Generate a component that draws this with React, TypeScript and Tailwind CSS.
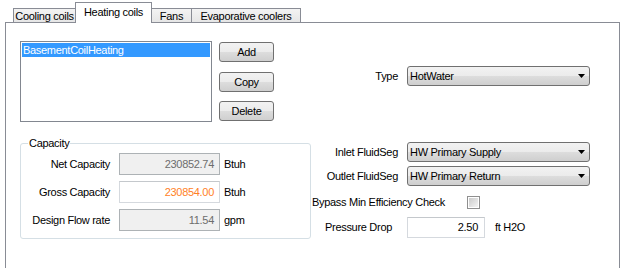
import type { ReactNode } from 'react'

const font = { fontFamily: '"Liberation Sans", Arial, sans-serif' }

type TabProps = {
  label: string
  width: string
  selected?: boolean
}

function Tab({ label, width, selected = false }: TabProps) {
  if (selected) {
    return (
      <div
        className={`relative z-10 -mb-px -ml-px flex h-[21px] items-center justify-center whitespace-nowrap border border-b-0 border-[#898c95] bg-white pb-[2px] ${width}`}
      >
        {label}
      </div>
    )
  }
  return (
    <div
      className={`-ml-px flex h-[14px] items-center justify-center whitespace-nowrap border border-b-0 border-[#898c95] bg-[linear-gradient(#f3f3f3,#e6e6e6)] pt-px ${width}`}
    >
      {label}
    </div>
  )
}

function Button({ children }: { children: ReactNode }) {
  return (
    <button className="flex h-[20px] w-[55px] items-center justify-center rounded-[3px] border border-[#707070] bg-[linear-gradient(#f2f2f2,#ebebeb_50%,#dddddd_50%,#cfcfcf)] text-black">
      {children}
    </button>
  )
}

function Combo({ value }: { value: string }) {
  return (
    <div className="flex h-[20px] w-[183px] items-center justify-between rounded-[3px] border border-[#707070] bg-[linear-gradient(#f2f2f2,#ebebeb_50%,#dddddd_50%,#cfcfcf)] pl-[2px] pr-[4px]">
      <span>{value}</span>
      <svg width="7" height="4" viewBox="0 0 7 4">
        <path d="M0 0h7L3.5 4z" fill="#000" />
      </svg>
    </div>
  )
}

type FieldProps = {
  label: string
  value: string
  unit: string
  disabled?: boolean
}

function CapacityRow({ label, value, unit, disabled = false }: FieldProps) {
  return (
    <div className="flex h-[22px] items-center">
      <div className="w-[89px] text-right">{label}</div>
      <div
        className={`ml-[9px] flex h-[22px] w-[101px] items-center justify-end border pr-[5px] ${
          disabled
            ? 'border-[#adb2b5] bg-[#f0f0f0] text-[#6d6d6d]'
            : 'border-[#d5d9de] border-t-[#c4c8cc] bg-white text-[#ff7f27]'
        }`}
      >
        {value}
      </div>
      <div className="ml-[4px]">{unit}</div>
    </div>
  )
}

export default function App() {
  return (
    <div
      className="h-[268px] w-[626px] overflow-hidden bg-white pl-[5px] text-[11px] leading-[13px] tracking-[-0.3px] text-black"
      style={font}
    >
      <div className="relative z-10 flex h-[22px] items-end pl-[9px]">
        <Tab label="Cooling coils" width="w-[63px]" />
        <Tab label="Heating coils" width="w-[77px]" selected />
        <Tab label="Fans" width="w-[41px]" />
        <Tab label="Evaporative coolers" width="w-[110px]" />
      </div>

      <div className="flex h-[260px] w-[615px] border border-[#898c95] pl-[14px] pt-[18px]">
        <div className="flex w-[291px] flex-col">
          <div className="flex">
            <div className="h-[81px] w-[192px] border border-[#828790] bg-white p-px">
              <div className="h-[14px] bg-[#3399ff] pl-px leading-[14px] text-white">BasementCoilHeating</div>
            </div>
            <div className="ml-[7px] flex flex-col pt-px">
              <Button>Add</Button>
              <div className="mt-[10px]">
                <Button>Copy</Button>
              </div>
              <div className="mt-[9px]">
                <Button>Delete</Button>
              </div>
            </div>
          </div>

          <fieldset className="mt-[15px] rounded-[3px] border border-[#d5dfe5] pb-[7px]">
            <legend className="ml-[7px] px-[1px]">Capacity</legend>
            <div className="mt-[3px] flex flex-col gap-[6px]">
              <CapacityRow label="Net Capacity" value="230852.74" unit="Btuh" disabled />
              <CapacityRow label="Gross Capacity" value="230854.00" unit="Btuh" />
              <CapacityRow label="Design Flow rate" value="11.54" unit="gpm" disabled />
            </div>
          </fieldset>
        </div>

        <div className="flex flex-col">
          <div className="mt-[25px] flex items-center">
            <div className="w-[87px] text-right">Type</div>
            <div className="ml-[9px]">
              <Combo value="HotWater" />
            </div>
          </div>

          <div className="mt-[56px] flex items-center">
            <div className="w-[87px] text-right">Inlet FluidSeg</div>
            <div className="ml-[9px]">
              <Combo value="HW Primary Supply" />
            </div>
          </div>
          <div className="mt-[4px] flex items-center">
            <div className="w-[87px] text-right">Outlet FluidSeg</div>
            <div className="ml-[9px]">
              <Combo value="HW Primary Return" />
            </div>
          </div>

          <div className="mt-[10px] flex h-[13px] items-center pl-px">
            <div className="w-[155px]">Bypass Min Efficiency Check</div>
            <div className="h-[13px] w-[13px] border border-[#8f8f8f] bg-white p-px">
              <div className="h-full w-full bg-[linear-gradient(135deg,#cbcbcb,#f4f4f4)]" />
            </div>
          </div>

          <div className="mt-[8px] flex items-center">
            <div className="w-[96px] pl-[14px]">Pressure Drop</div>
            <div className="flex h-[21px] w-[78px] items-center justify-end border border-[#d5d9de] border-t-[#c4c8cc] bg-white pr-[6px]">
              2.50
            </div>
            <div className="ml-[10px]">ft H2O</div>
          </div>
        </div>
      </div>
    </div>
  )
}
